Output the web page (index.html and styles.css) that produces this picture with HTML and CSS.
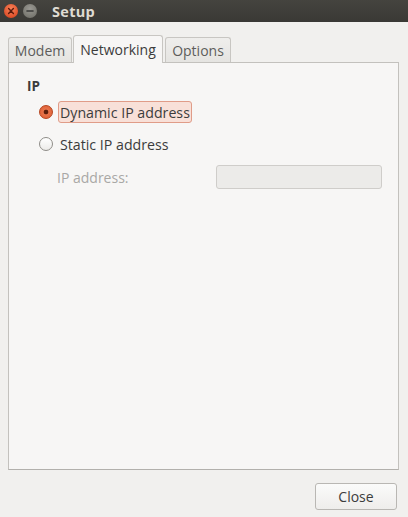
FILE: index.html
```html
<!DOCTYPE html>
<html>
<head>
<meta charset="utf-8">
<link rel="stylesheet" href="styles.css">
</head>
<body>
<div class="window">
  <div class="titlebar">
    <span class="wbtn close"><svg width="14" height="14" viewBox="0 0 14 14"><path d="M4.6 4.6 L9.4 9.4 M9.4 4.6 L4.6 9.4" stroke="#5a1a0c" stroke-width="1.4" stroke-linecap="round"/></svg></span>
    <span class="wbtn min"><svg width="14" height="14" viewBox="0 0 14 14"><path d="M4 7 H10" stroke="#3a3a38" stroke-width="1.6" stroke-linecap="round"/></svg></span>
    <span class="title">Setup</span>
  </div>
  <div class="content">
    <div class="tabs">
      <div class="tab">Modem</div>
      <div class="tab active">Networking</div>
      <div class="tab">Options</div>
    </div>
    <div class="panel">
      <div class="section">IP</div>
      <div class="radio-row">
        <span class="radio checked"></span>
        <span class="label focus">Dynamic IP address</span>
      </div>
      <div class="radio-row second">
        <span class="radio"></span>
        <span class="label">Static IP address</span>
      </div>
      <div class="field-row">
        <span class="field-label">IP address:</span>
        <span class="entry"></span>
      </div>
    </div>
    <div class="actions">
      <button class="btn">Close</button>
    </div>
  </div>
</div>
</body>
</html>
```
FILE: styles.css
```css
* { box-sizing: border-box; }
html, body { margin: 0; padding: 0; }
body {
  width: 408px;
  height: 517px;
  background: #f1f0ee;
  font-family: "Open Sans", "DejaVu Sans", sans-serif;
  font-size: 14px;
  color: #3c3c3c;
  overflow: hidden;
}
.window { display: flex; flex-direction: column; height: 517px; }
.titlebar {
  height: 22px;
  background: linear-gradient(#45443f, #3a3935);
  display: flex;
  align-items: center;
  padding-left: 4px;
}
.wbtn {
  width: 14px; height: 14px; border-radius: 50%;
  display: flex; align-items: center; justify-content: center;
  margin-right: 5px;
}
.wbtn.close { background: radial-gradient(circle at 50% 35%, #f6835a, #e0512b 70%, #c43f1d); }
.wbtn.min { background: radial-gradient(circle at 50% 35%, #9a9993, #77766f 75%, #66655f); }
.title {
  margin-left: 10px;
  color: #dfdbd2;
  font-weight: bold;
  font-size: 14.5px;
  letter-spacing: 0.3px;
}
.content { flex: 1; display: flex; flex-direction: column; padding: 13px 9px 0 8px; }
.tabs { display: flex; align-items: flex-end; height: 27px; padding-left: 0; }
.tab {
  height: 25px;
  padding: 0 5px;
  border: 1px solid #c8c6c2;
  border-bottom: none;
  border-radius: 3px 3px 0 0;
  background: linear-gradient(#efeeec, #e5e4e1);
  color: #5d5d5b;
  display: flex; align-items: center;
  margin-right: 1px;
  width: 64px;
  justify-content: center;
}
.tab.active {
  height: 28px;
  width: 90px;
  background: #f7f6f5;
  color: #3c3c3c;
  margin-bottom: -1px;
  position: relative;
  z-index: 1;
  margin-right: 2px;
}
.tab:last-child { width: 66px; }
.panel {
  height: 408px;
  background: #f7f6f5;
  border: 1px solid #c3c1bd;
  border-bottom-color: #b2b0ac;
  padding: 13px 16px 0 18px;
}
.section { font-weight: bold; font-size: 13.5px; height: 20px; line-height: 20px; color: #3c3c3c; }
.radio-row { display: flex; align-items: center; height: 22px; margin-top: 5px; padding-left: 12px; }
.radio-row.second { margin-top: 10px; }
.radio {
  width: 14px; height: 14px; border-radius: 50%;
  border: 1px solid #8f8d88;
  background: linear-gradient(#ffffff, #ecebe9);
  flex: none;
  position: relative;
}
.radio.checked {
  border-color: #b5451f;
  background: radial-gradient(circle, #5c1f0c 0 2px, #e8734a 2.7px, #dc5b30 100%);
}
.label { margin-left: 5px; padding: 1px 1px; border: 1px solid transparent; height: 22px; line-height: 19px; font-size: 14.2px; }
.label.focus { background: #f8e0d8; border-color: #e09c88; border-radius: 3px; }
.field-row { display: flex; align-items: center; margin-top: 10px; height: 24px; padding-left: 30px; }
.field-label { color: #a9a8a5; width: 159px; }
.entry {
  width: 166px; height: 24px;
  border: 1px solid #cfcdca;
  border-radius: 3px;
  background: #ecebe9;
}
.actions { display: flex; justify-content: flex-end; padding-top: 13px; padding-right: 2px; }
.btn {
  width: 82px; height: 27px;
  font-family: inherit; font-size: 14px; color: #3c3c3c;
  border: 1px solid #b9b7b3;
  border-radius: 3px;
  background: linear-gradient(#fbfbfa, #eeedeb);
  padding: 0;
}
```
